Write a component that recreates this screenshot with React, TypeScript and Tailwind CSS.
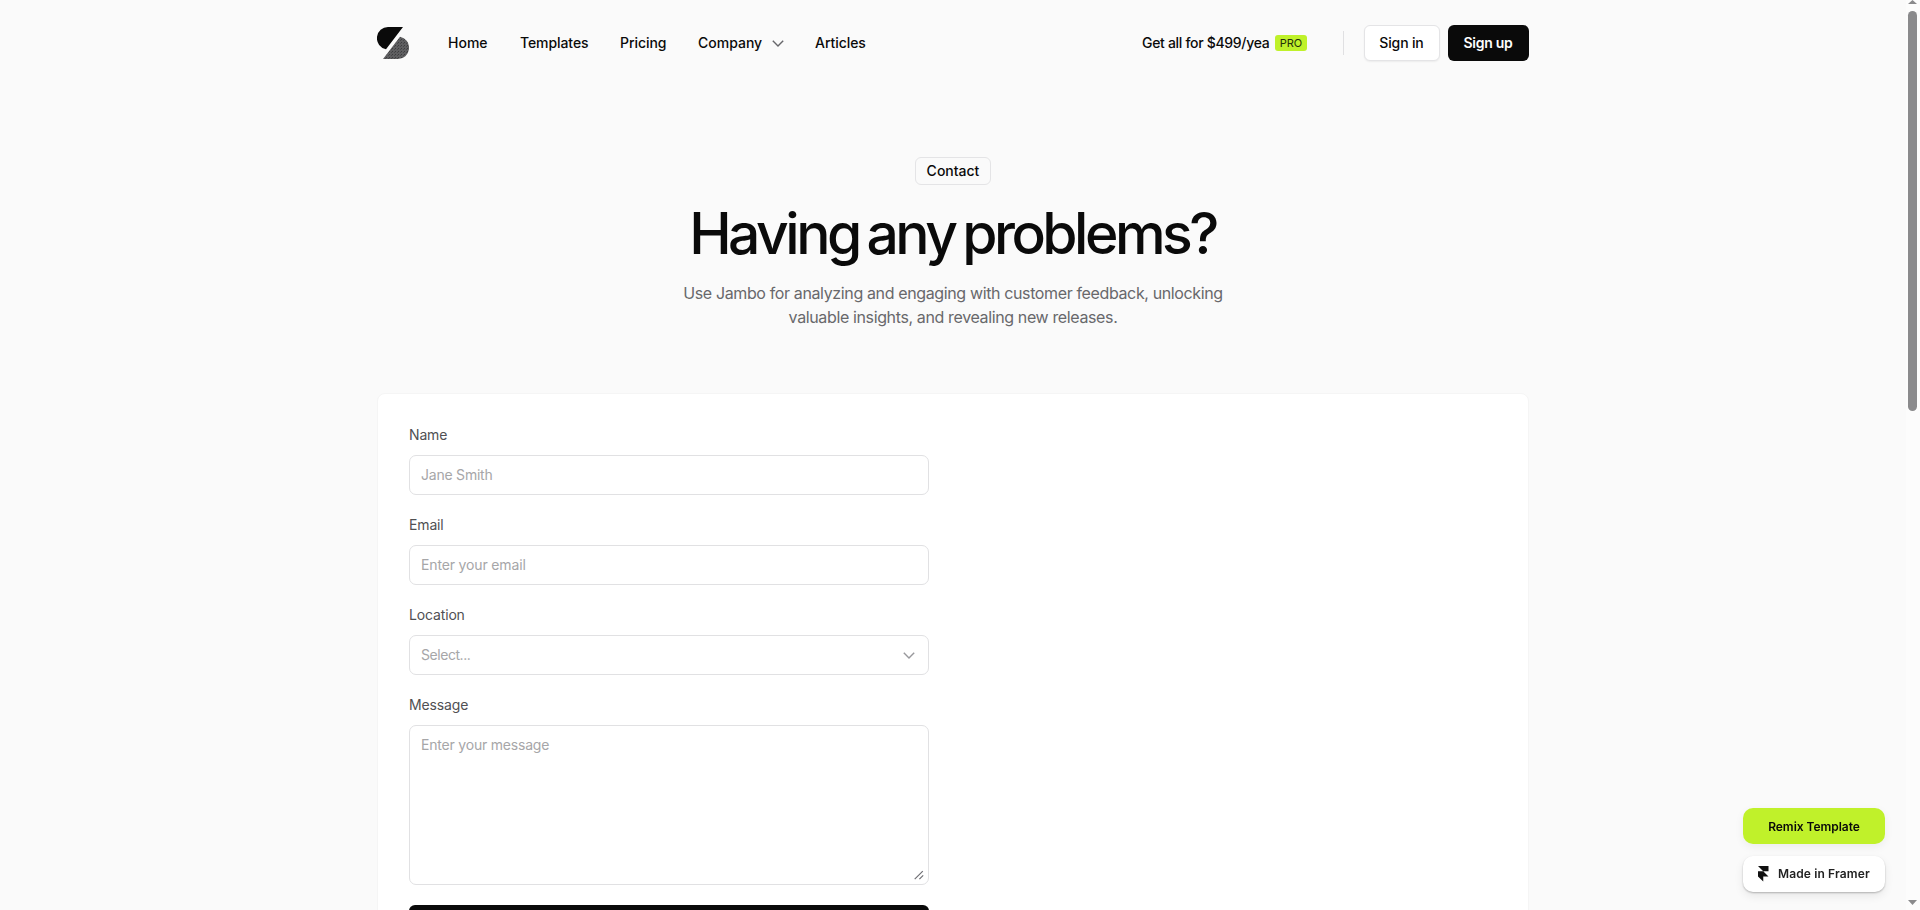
import clsx from "clsx";

const NAV: { label: string; className: string; menu?: boolean }[] = [
  { label: "Home", className: "w-[40px] tracking-[0px]" },
  { label: "Templates", className: "w-[68px] tracking-[-0.08px]" },
  { label: "Pricing", className: "w-[46px] tracking-[-0.05px]" },
  { label: "Company", className: "w-[85px] tracking-[0px]", menu: true },
  { label: "Articles", className: "w-[52px] tracking-[-0.05px]" },
];

const FIELD = "w-full rounded-[7px] border border-[#e1e1e3] bg-white px-[11px] text-sm leading-5 text-[#222] outline-none placeholder:text-[#a6a6a8] placeholder:opacity-100";

function Logo() {
  return (
    <svg width="32" height="32" viewBox="0 0 32 32" fill="none" aria-hidden>
      <defs>
        <pattern id="grain" width="3" height="3" patternUnits="userSpaceOnUse">
          <rect width="3" height="3" fill="#5e5e60" />
          <rect width="1" height="1" fill="#3c3c3e" />
          <rect x="2" y="1" width="1" height="1" fill="#48484a" />
        </pattern>
      </defs>
      <path d="M26 0H11.2A11.2 11.2 0 0 0 9 22.2Z" fill="#0a0a0a" />
      <path d="M6 32h14.8A11.2 11.2 0 0 0 23 9.8Z" fill="url(#grain)" />
    </svg>
  );
}

function Chevron({ className }: { className?: string }) {
  return (
    <svg width="12" height="7" viewBox="0 0 12 7" fill="none" className={className} aria-hidden>
      <path d="M0.8 0.8 6 6 11.2 0.8" stroke="currentColor" strokeWidth="1.4" />
    </svg>
  );
}

function Header() {
  return (
    <header className="flex items-center pt-[25px] text-sm font-medium text-[#0a0a0a]">
      <Logo />
      <nav className="ml-[39px] flex gap-8">
        {NAV.map((item) => (
          <a key={item.label} href="#" className={clsx("flex items-center whitespace-nowrap", item.className)}>
            {item.label}
            {item.menu && <Chevron className="ml-[10px] shrink-0 text-[#66666a]" />}
          </a>
        ))}
      </nav>
      <a href="#" className="ml-auto flex items-center">
        <span className="w-[133px] whitespace-nowrap tracking-[-0.31px]">Get all for $499/yea</span>
        <span className="flex h-4 w-8 items-center justify-center rounded-[3px] bg-[#bff12a] text-[11px] font-normal leading-4 text-[#26300a]">
          PRO
        </span>
      </a>
      <span className="ml-9 h-6 w-px bg-[#e0e0e2]" />
      <a href="#" className="ml-5 flex h-9 w-[76px] items-center justify-center rounded-md border border-[#e4e4e6] bg-white pr-px tracking-[-0.15px] shadow-[0_1px_2px_rgba(0,0,0,0.06)]">
        Sign in
      </a>
      <a href="#" className="ml-2 flex h-9 w-[81px] items-center justify-center rounded-md bg-[#0a0a0a] pr-px font-semibold tracking-[-0.25px] text-white">
        Sign up
      </a>
    </header>
  );
}

function Hero() {
  return (
    <section className="mt-24 flex flex-col items-center text-center">
      <span className="flex h-7 w-[76px] items-center justify-center rounded-md border border-[#e4e4e6] text-sm font-medium text-[#0a0a0a]">
        Contact
      </span>
      <h1 className="mt-4 mr-px whitespace-nowrap text-[57px] font-medium leading-[66px] tracking-[-3.5px] text-[#0a0a0a] [word-spacing:-4px]">
        Having any problems?
      </h1>
      <p className="mt-[14px] w-[560px] text-base leading-6 tracking-[-0.37px] text-[#68686b]">
        Use Jambo for analyzing and engaging with customer feedback, unlocking
        <br />
        valuable insights, and revealing new releases.
      </p>
    </section>
  );
}

function Label({ children }: { children: string }) {
  return <span className="mb-[10px] block text-sm leading-5 tracking-[-0.15px] text-[#505053]">{children}</span>;
}

function ContactForm() {
  return (
    <div className="mt-16 h-[640px] rounded-lg border border-[#f5f5f5] bg-white p-[31px]">
      <form className="flex w-[520px] flex-col gap-5">
        <label className="block">
          <Label>Name</Label>
          <input className={clsx(FIELD, "block h-10 pb-[2px] tracking-[-0.22px]")} placeholder="Jane Smith" />
        </label>
        <label className="block">
          <Label>Email</Label>
          <input className={clsx(FIELD, "block h-10 pb-[2px] tracking-[-0.15px]")} placeholder="Enter your email" />
        </label>
        <div>
          <Label>Location</Label>
          <button type="button" className={clsx(FIELD, "flex h-10 items-center justify-between")}>
            <span className="tracking-[-0.45px] text-[#a6a6a8]">Select...</span>
            <Chevron className="mr-[2px] text-[#98989c]" />
          </button>
        </div>
        <label className="relative block">
          <Label>Message</Label>
          <textarea
            className={clsx(FIELD, "block h-40 resize-none py-[9px] tracking-[-0.2px]")}
            placeholder="Enter your message"
          />
          <svg width="10" height="10" viewBox="0 0 10 10" className="absolute right-[5px] bottom-[5px]" aria-hidden>
            <path d="M0.7 9.2 8.8 1.1M5.4 9.2 9.2 5.4" stroke="#6f6f74" strokeWidth="1.2" />
          </svg>
        </label>
        <button type="submit" aria-label="Submit" className="h-10 rounded-md bg-[#0a0a0a]" />
      </form>
    </div>
  );
}

function FloatingBadges() {
  return (
    <div className="fixed right-[35px] bottom-[18px] flex w-[142px] flex-col gap-3 text-xs font-semibold">
      <a href="#" className="flex h-9 items-center justify-center rounded-[10px] bg-[#c0f12a] pt-px tracking-[-0.04px] text-[#0a0a0a] shadow-[0_3px_10px_rgba(0,0,0,0.06)]">
        Remix Template
      </a>
      <a href="#" className="flex h-9 items-center rounded-[10px] bg-white pl-[15px] tracking-[0.13px] text-[#222] shadow-[0_1px_2px_rgba(0,0,0,0.25),0_4px_10px_rgba(0,0,0,0.08)]">
        <svg width="11" height="16" viewBox="0 0 11 16" fill="#111" className="mr-[9px]" aria-hidden>
          <path d="M0 0h10.5v5.2H5.25zM0 5.2h5.25l5.25 5.2H0zM0 10.4h5.25v5.2z" />
        </svg>
        Made in Framer
      </a>
    </div>
  );
}

function Scrollbar() {
  return (
    <div className="flex w-[14px] flex-col items-center bg-[#fcfcfc] pr-[1px]">
      <svg width="9" height="4" viewBox="0 0 9 4" fill="#8a8a8c" aria-hidden>
        <path d="M4.5 0 9 4H0z" />
      </svg>
      <div className="mt-[7px] h-[400px] w-[9px] rounded-full bg-[#8a8a8c]" />
      <svg width="9" height="5" viewBox="0 0 9 5" fill="#8a8a8c" className="mt-auto mb-[5px]" aria-hidden>
        <path d="M0 0h9L4.5 5z" />
      </svg>
    </div>
  );
}

export default function App() {
  return (
    <div className="flex h-[910px] w-full overflow-hidden bg-[#fafafa] font-['Inter',sans-serif] antialiased">
      <main className="flex-1">
        <div className="mx-auto w-[1152px]">
          <Header />
          <Hero />
          <ContactForm />
        </div>
      </main>
      <Scrollbar />
      <FloatingBadges />
    </div>
  );
}
